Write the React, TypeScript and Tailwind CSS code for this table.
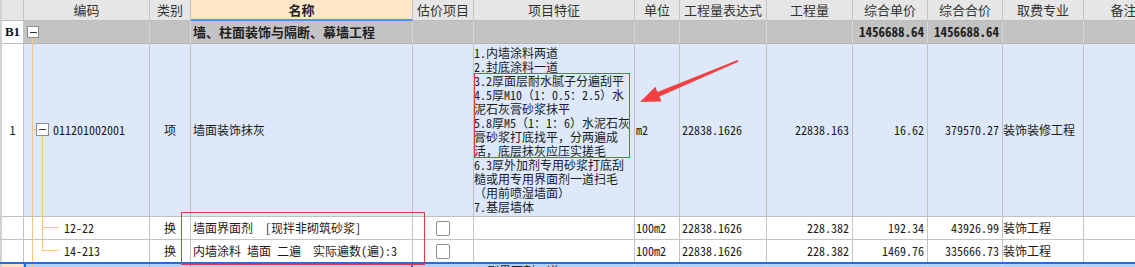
import React from "react";

const ROW =
  "grid grid-cols-[24px_126px_41px_222px_61px_161px_45px_87px_86px_75px_75px_81px_80px] w-[1163px]";

const headers = [
  "",
  "编码",
  "类别",
  "名称",
  "估价项目",
  "项目特征",
  "单位",
  "工程量表达式",
  "工程量",
  "综合单价",
  "综合合价",
  "取费专业",
  "备注",
];

const features = [
  "1.内墙涂料两道",
  "2.封底涂料一道",
  "3.2厚面层耐水腻子分遍刮平",
  "4.5厚M10（1：0.5：2.5）水",
  "泥石灰膏砂浆抹平",
  "5.8厚M5（1：1：6）水泥石灰",
  "膏砂浆打底找平，分两遍成",
  "活，底层抹灰应压实搓毛",
  "6.3厚外加剂专用砂浆打底刮",
  "糙或用专用界面剂一道扫毛",
  "（用前喷湿墙面）",
  "7.基层墙体",
];

const OR = "absolute bg-[#fbc67c]";

function MinusBox({ cls }: { cls: string }) {
  return (
    <div className={`absolute border border-[#8c8c8c] bg-white flex items-center justify-center ${cls}`}>
      <div className="w-[7px] h-[1px] bg-[#333]" />
    </div>
  );
}

function Checkbox() {
  return <div className="w-[14px] h-[15px] rounded-[2px] border border-[#8e8e8e] bg-white" />;
}

export default function App() {
  return (
    <div className="relative w-[1135px] h-[267px] overflow-hidden bg-white font-['Noto_Sans_Mono_CJK_SC','Noto_Sans_CJK_SC',sans-serif] text-[12px] leading-[14px] text-[#1a1a1a]">
      {/* header */}
      <div className={`${ROW} h-[21px]`}>
        {headers.map((h, i) => (
          <div
            key={i}
            className={
              i === 3
                ? "flex items-center justify-center bg-[#fee6c8] border-r border-r-[#c4c4c4] border-b-2 border-b-[#4d94ee] font-bold text-[13px] text-[#222] whitespace-nowrap overflow-hidden pt-[1px]"
                : i === 0
                ? "bg-[#e6e6e6] border-l-2 border-l-[#d2d2d2] border-r border-r-[#c4c4c4] border-b border-b-[#bdbdbd]"
                : "flex items-center justify-center bg-[#e6e6e6] border-r border-r-[#c4c4c4] border-b border-b-[#bdbdbd] text-[13px] text-[#333] whitespace-nowrap overflow-hidden"
            }
          >
            {h}
          </div>
        ))}
      </div>

      {/* B1 row */}
      <div className={`${ROW} h-[23px] bg-[#c3c3c3]`}>
        <div className="flex items-center justify-center bg-white border-l-2 border-l-[#d2d2d2] border-r border-r-[#c4c4c4] border-b border-b-[#bdbdbd] font-bold text-[13px] font-['Liberation_Serif','Noto_Sans_CJK_SC',serif] text-[#111]">
          B1
        </div>
        <div className="relative border-r border-r-[#d6d6d6] border-b border-b-[#b4b4b4]">
          <MinusBox cls="left-[3px] top-[5px] w-[12px] h-[12px]" />
          <div className={`${OR} left-[8px] top-[17px] w-[1px] h-[6px]`} />
        </div>
        <div className="border-r border-r-[#d6d6d6] border-b border-b-[#b4b4b4]" />
        <div className="flex items-center pl-[2px] border-r border-r-[#d6d6d6] border-b border-b-[#b4b4b4] font-bold text-[13px] text-[#222] whitespace-nowrap overflow-hidden">
          墙、柱面装饰与隔断、幕墙工程
        </div>
        {[4, 5, 6, 7, 8].map((k) => (
          <div key={k} className="border-r border-r-[#d6d6d6] border-b border-b-[#b4b4b4]" />
        ))}
        <div className="flex items-center justify-end pr-[3px] border-r border-r-[#d6d6d6] border-b border-b-[#b4b4b4] font-bold text-[13px] text-[#222] whitespace-nowrap">
          1456688.64
        </div>
        <div className="flex items-center justify-end pr-[3px] border-r border-r-[#d6d6d6] border-b border-b-[#b4b4b4] font-bold text-[13px] text-[#222] whitespace-nowrap">
          1456688.64
        </div>
        <div className="border-r border-r-[#d6d6d6] border-b border-b-[#b4b4b4]" />
        <div className="border-r border-r-[#d6d6d6] border-b border-b-[#b4b4b4]" />
      </div>

      {/* row 1 */}
      <div className={`${ROW} h-[173px] bg-[#dde9fb]`}>
        <div className="flex items-center justify-center bg-white border-l-2 border-l-[#d2d2d2] border-r border-r-[#c4c4c4] border-b border-b-[#c0c0c0]">
          1
        </div>
        <div className="relative flex items-center pl-[29px] border-r border-r-[#c0c0c0] border-b border-b-[#c0c0c0] whitespace-nowrap">
          <div className={`${OR} left-[8px] top-0 w-[1px] h-full`} />
          <div className={`${OR} left-[8px] top-[85px] w-[5px] h-[1px]`} />
          <MinusBox cls="left-[12px] top-[79px] w-[13px] h-[13px]" />
          <div className={`${OR} left-[18px] top-[92px] w-[1px] h-[81px]`} />
          011201002001
        </div>
        <div className="flex items-center justify-center border-r border-r-[#c0c0c0] border-b border-b-[#c0c0c0]">
          项
        </div>
        <div className="flex items-center pl-[2px] border-r border-r-[#c0c0c0] border-b border-b-[#c0c0c0] whitespace-nowrap">
          墙面装饰抹灰
        </div>
        <div className="border-r border-r-[#c0c0c0] border-b border-b-[#c0c0c0]" />
        <div className="pt-[2px] border-r border-r-[#c0c0c0] border-b border-b-[#c0c0c0] overflow-hidden">
          {features.map((f, i) => (
            <div key={i} className="whitespace-nowrap h-[14px]">
              {f}
            </div>
          ))}
        </div>
        <div className="flex items-center pl-[1px] border-r border-r-[#c0c0c0] border-b border-b-[#c0c0c0]">
          m2
        </div>
        <div className="flex items-center pl-[2px] border-r border-r-[#c0c0c0] border-b border-b-[#c0c0c0] whitespace-nowrap">
          22838.1626
        </div>
        <div className="flex items-center justify-end pr-[3px] border-r border-r-[#c0c0c0] border-b border-b-[#c0c0c0]">
          22838.163
        </div>
        <div className="flex items-center justify-end pr-[3px] border-r border-r-[#c0c0c0] border-b border-b-[#c0c0c0]">
          16.62
        </div>
        <div className="flex items-center justify-end pr-[3px] border-r border-r-[#c0c0c0] border-b border-b-[#c0c0c0]">
          379570.27
        </div>
        <div className="flex items-center border-r border-r-[#c0c0c0] border-b border-b-[#c0c0c0] whitespace-nowrap">
          装饰装修工程
        </div>
        <div className="border-r border-r-[#c0c0c0] border-b border-b-[#c0c0c0]" />
      </div>

      {/* row 12-22 */}
      <div className={`${ROW} h-[23px] bg-white`}>
        <div className="border-l-2 border-l-[#d2d2d2] border-r border-r-[#c4c4c4] border-b border-b-[#c4c4c4]" />
        <div className="relative flex items-center pl-[40px] border-r border-r-[#c4c4c4] border-b border-b-[#c4c4c4]">
          <div className={`${OR} left-[8px] top-0 w-[1px] h-full`} />
          <div className={`${OR} left-[18px] top-0 w-[1px] h-full`} />
          <div className={`${OR} left-[18px] top-[10px] w-[17px] h-[1px]`} />
          12-22
        </div>
        <div className="flex items-center justify-center border-r border-r-[#c4c4c4] border-b border-b-[#c4c4c4]">
          换
        </div>
        <div className="flex items-center pl-[2px] border-r border-r-[#c4c4c4] border-b border-b-[#c4c4c4] whitespace-pre">
          {"墙面界面剂  [现拌非砌筑砂浆]"}
        </div>
        <div className="flex items-center justify-center border-r border-r-[#c4c4c4] border-b border-b-[#c4c4c4]">
          <Checkbox />
        </div>
        <div className="border-r border-r-[#c4c4c4] border-b border-b-[#c4c4c4]" />
        <div className="flex items-center pl-[1px] border-r border-r-[#c4c4c4] border-b border-b-[#c4c4c4]">
          100m2
        </div>
        <div className="flex items-center pl-[2px] border-r border-r-[#c4c4c4] border-b border-b-[#c4c4c4]">
          22838.1626
        </div>
        <div className="flex items-center justify-end pr-[3px] border-r border-r-[#c4c4c4] border-b border-b-[#c4c4c4]">
          228.382
        </div>
        <div className="flex items-center justify-end pr-[3px] border-r border-r-[#c4c4c4] border-b border-b-[#c4c4c4]">
          192.34
        </div>
        <div className="flex items-center justify-end pr-[3px] border-r border-r-[#c4c4c4] border-b border-b-[#c4c4c4]">
          43926.99
        </div>
        <div className="flex items-center border-r border-r-[#c4c4c4] border-b border-b-[#c4c4c4] whitespace-nowrap">
          装饰工程
        </div>
        <div className="border-r border-r-[#c4c4c4] border-b border-b-[#c4c4c4]" />
      </div>

      {/* row 14-213 */}
      <div className={`${ROW} h-[22px] bg-white`}>
        <div className="border-l-2 border-l-[#d2d2d2] border-r border-r-[#c4c4c4]" />
        <div className="relative flex items-center pl-[40px] border-r border-r-[#c4c4c4]">
          <div className={`${OR} left-[8px] top-0 w-[1px] h-full`} />
          <div className={`${OR} left-[18px] top-0 w-[1px] h-[10px]`} />
          <div className={`${OR} left-[18px] top-[10px] w-[17px] h-[1px]`} />
          14-213
        </div>
        <div className="flex items-center justify-center border-r border-r-[#c4c4c4]">换</div>
        <div className="flex items-center pl-[2px] border-r border-r-[#c4c4c4] whitespace-pre">
          {"内墙涂料 墙面 二遍  实际遍数(遍):3"}
        </div>
        <div className="flex items-center justify-center border-r border-r-[#c4c4c4]">
          <Checkbox />
        </div>
        <div className="border-r border-r-[#c4c4c4]" />
        <div className="flex items-center pl-[1px] border-r border-r-[#c4c4c4]">100m2</div>
        <div className="flex items-center pl-[2px] border-r border-r-[#c4c4c4]">22838.1626</div>
        <div className="flex items-center justify-end pr-[3px] border-r border-r-[#c4c4c4]">228.382</div>
        <div className="flex items-center justify-end pr-[3px] border-r border-r-[#c4c4c4]">1469.76</div>
        <div className="flex items-center justify-end pr-[3px] border-r border-r-[#c4c4c4]">335666.73</div>
        <div className="flex items-center border-r border-r-[#c4c4c4] whitespace-nowrap">装饰工程</div>
        <div className="border-r border-r-[#c4c4c4]" />
      </div>

      {/* selection line */}
      <div className="w-[1163px] h-[2px] bg-[#1c6fe6]" />

      {/* bottom selected row (cut) */}
      <div className={`${ROW} h-[20px] bg-[#b1d1f7]`}>
        <div className="bg-[#fde3c2] border-l-2 border-l-[#d2d2d2] border-r border-r-[#c4c4c4]" />
        <div className="relative border-l-2 border-l-[#1c6fe6] border-r border-r-[#9fb6d6]">
          <div className={`${OR} left-[6px] top-0 w-[1px] h-full`} />
        </div>
        <div className="border-r border-r-[#9fb6d6]" />
        <div className="border-r-2 border-r-[#1c6fe6]" />
        <div className="border-r border-r-[#c4d8f0]" />
        <div className="pl-[1px] border-r border-r-[#c4d8f0] whitespace-nowrap overflow-hidden">
          1.刷界面剂一道
        </div>
        <div className="border-r border-r-[#c4d8f0]" />
        <div className="border-r border-r-[#c4d8f0]" />
        <div className="border-r border-r-[#c4d8f0]" />
        <div className="border-r border-r-[#c4d8f0]" />
        <div className="border-r border-r-[#c4d8f0]" />
        <div className="border-r border-r-[#c4d8f0]" />
        <div className="border-r border-r-[#c4d8f0]" />
      </div>

      {/* annotations */}
      <div className="absolute left-[474px] top-[73px] w-[156px] h-[85px] border border-[#e53b3b] pointer-events-none" />
      <div className="absolute left-[181px] top-[212px] w-[244px] h-[53px] border border-[#e53b3b] pointer-events-none" />
      <svg className="absolute left-0 top-0 pointer-events-none" width="1135" height="267" viewBox="0 0 1135 267">
        <polygon
          points="737.6,60 657.5,91.9 655.4,86.8 640,102 661.6,101.6 659.5,96.5 738.4,61.8"
          fill="#f24040"
        />
      </svg>
    </div>
  );
}
